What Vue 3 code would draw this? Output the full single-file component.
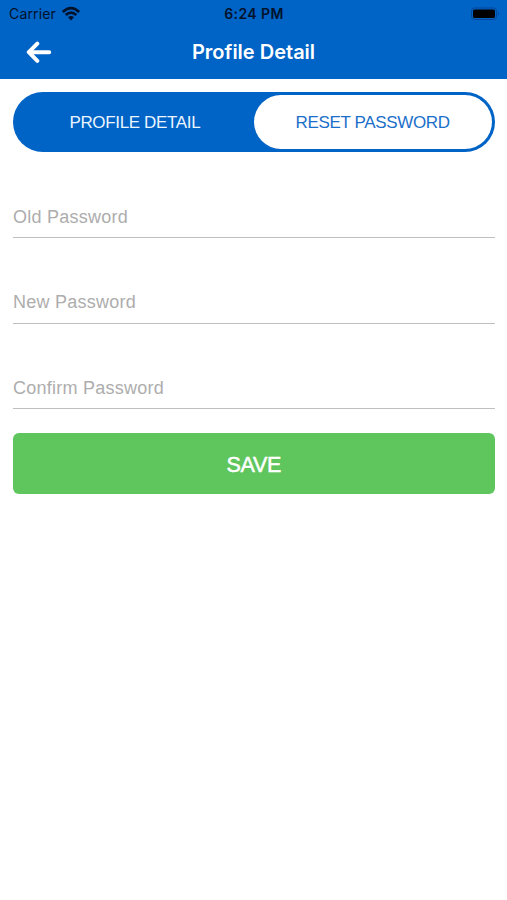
<script setup>
import { ref } from 'vue'

const tabs = ['PROFILE DETAIL', 'RESET PASSWORD']
const active = ref(1)
const fields = [
  { id: 'old', label: 'Old Password' },
  { id: 'new', label: 'New Password' },
  { id: 'confirm', label: 'Confirm Password' }
]
</script>

<template>
  <div class="screen">
    <header class="header">
      <div class="status">
        <div class="carrier">
          <span class="carrier-name">Carrier</span>
          <svg class="wifi" width="20" height="16" viewBox="0 0 20 16">
            <path d="M1.8 6 Q10 -1.6 18.2 6" />
            <path d="M4.7 9.1 Q10 4.3 15.3 9.1" />
            <path class="dot" d="M7 11.3 Q10 8.7 13 11.3 L10 14.4 Z" />
          </svg>
        </div>
        <span class="time">6:24 PM</span>
        <div class="power">
          <svg width="31" height="14" viewBox="0 0 31 14">
            <rect class="shell" x="1.5" y="1" width="25" height="11.5" rx="3" />
            <rect x="3" y="2.4" width="22" height="8.6" rx="1.6" />
            <path class="cap" d="M28 5 Q30 6.8 28 8.6 Z" />
          </svg>
        </div>
      </div>
      <div class="nav">
        <button class="back" aria-label="Back">
          <svg width="26" height="22" viewBox="0 0 26 22">
            <path d="M11.3 2.6 L2.8 11.2 L11.3 19.8 M3.2 11.2 H23.2" />
          </svg>
        </button>
        <h1 class="title">Profile Detail</h1>
      </div>
    </header>

    <main class="content">
      <div class="tabs">
        <button
          v-for="(tab, i) in tabs"
          :key="tab"
          class="tab"
          :class="{ active: i === active }"
          @click="active = i"
        >{{ tab }}</button>
      </div>
      <form class="form" @submit.prevent>
        <input
          v-for="f in fields"
          :key="f.id"
          class="field"
          type="password"
          :placeholder="f.label"
        />
        <button class="save">SAVE</button>
      </form>
    </main>
  </div>
</template>

<style>
body {
  background: #fff;
}
</style>

<style scoped>
.screen {
  min-height: 900px;
  background: #fff;
  font-family: "Liberation Sans", Arial, sans-serif;
}
.screen * {
  box-sizing: border-box;
}
button {
  border: 0;
  padding: 0;
  background: none;
  font-family: inherit;
}
.header {
  height: 79px;
  background: #0063c6;
  font-family: Inter, sans-serif;
}
.status {
  display: grid;
  grid-template-columns: 1fr auto 1fr;
  align-items: center;
  height: 27px;
  padding: 0 6px 0 9px;
  color: #02122b;
}
.carrier {
  display: flex;
  align-items: center;
  gap: 5px;
}
.carrier-name {
  font-size: 14px;
  letter-spacing: 0.15px;
}
.wifi {
  fill: none;
  stroke: #02122b;
  stroke-width: 2.7;
}
.wifi .dot {
  fill: #02122b;
  stroke: none;
}
.time {
  margin-left: -2px;
  font-size: 14px;
  font-weight: 600;
  letter-spacing: 0.4px;
}
.power {
  display: flex;
  justify-content: flex-end;
}
.power svg {
  fill: #000;
}
.power .shell {
  fill: none;
  stroke: #06479a;
  stroke-width: 1;
}
.power .cap {
  fill: #06479a;
}
.nav {
  display: grid;
  grid-template-columns: 1fr auto 1fr;
  align-items: center;
  height: 50px;
  padding: 0 25px;
}
.back {
  display: flex;
  width: 26px;
  margin-left: 1px;
}
.back path {
  fill: none;
  stroke: #fff;
  stroke-width: 4;
  stroke-linecap: round;
  stroke-linejoin: round;
}
.title {
  margin: 0;
  color: #fff;
  font-size: 20px;
  font-weight: 600;
  line-height: 24px;
}
.content {
  padding: 12.5px 12.5px 0 13px;
}
.tabs {
  display: grid;
  grid-template-columns: 1fr 1fr;
  height: 60.5px;
  padding: 3px;
  border-radius: 31px;
  background: #0063c6;
}
.tab {
  padding-top: 2px;
  border-radius: 28px;
  color: #eaf5ff;
  font-size: 17px;
  letter-spacing: -0.35px;
}
.tab.active {
  background: #fff;
  color: #1b6fca;
}
.form {
  display: flex;
  flex-direction: column;
  padding-top: 42px;
}
.field {
  height: 44px;
  margin-bottom: 41.7px;
  padding: 3px 0 0;
  border: 0;
  border-bottom: 1px solid #bfbfbf;
  border-radius: 0;
  outline: 0;
  background: none;
  font-family: inherit;
  font-size: 18px;
  letter-spacing: 0.25px;
}
.field:nth-of-type(3) {
  margin-bottom: 24.1px;
}
.field::placeholder {
  color: #adadad;
  opacity: 1;
}
.save {
  height: 60.5px;
  padding-top: 3px;
  border-radius: 6px;
  background: #5fc55d;
  color: #fff;
  font-size: 21.5px;
  letter-spacing: -0.3px;
  -webkit-text-stroke: 0.5px #fff;
}
</style>
